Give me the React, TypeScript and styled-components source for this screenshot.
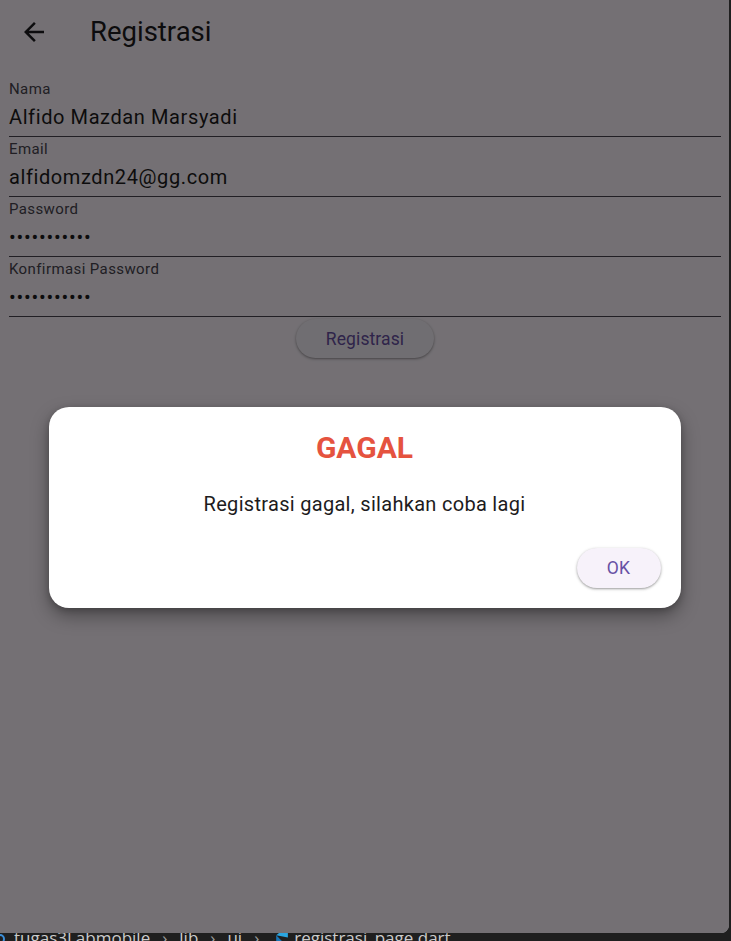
import React from "react";
import styled, { createGlobalStyle } from "styled-components";

const Global = createGlobalStyle`
  html, body {
    margin: 0;
    padding: 0;
    background: #1f1f1f;
    font-family: Roboto, "Liberation Sans", sans-serif;
  }
  #root {
    width: 731px;
    height: 941px;
    overflow: hidden;
  }
`;

const Screen = styled.div`
  display: flex;
  flex-direction: column;
  width: 731px;
  height: 941px;
`;

const AppWindow = styled.div`
  position: relative;
  z-index: 1;
  width: 729px;
  height: 933px;
  flex: none;
  background: #fef7ff;
  border-bottom-right-radius: 8px;
  overflow: hidden;
`;

const AppBar = styled.header`
  display: flex;
  align-items: center;
  height: 64px;
  padding-left: 19px;
`;

const IconButton = styled.button`
  display: flex;
  align-items: center;
  justify-content: center;
  width: 30px;
  height: 30px;
  padding: 0;
  border: none;
  background: transparent;
  color: #1d1b20;
`;

const Title = styled.h1`
  margin: 0 0 0 41px;
  font-size: 27.5px;
  font-weight: 400;
  color: #1d1b20;
  line-height: 34px;
`;

const Form = styled.form`
  display: flex;
  flex-direction: column;
  gap: 3px;
  padding: 16px 8px 0 9px;
`;

const Field = styled.div`
  display: flex;
  flex-direction: column;
  gap: 7px;
  padding-bottom: 6px;
  border-bottom: 1px solid #49454f;
`;

const Label = styled.label`
  font-size: 15px;
  line-height: 18px;
  letter-spacing: 0.4px;
  color: #49454f;
`;

const Value = styled.div<{ $secret?: boolean }>`
  font-size: 20px;
  line-height: 25px;
  letter-spacing: ${(p) => (p.$secret ? "0.75px" : "0.6px")};
  color: #1d1b20;
  white-space: nowrap;
`;

const ButtonRow = styled.div`
  display: flex;
  justify-content: center;
  margin-top: -1px;
`;

const PillButton = styled.button<{ $w: number; $h: number }>`
  width: ${(p) => p.$w}px;
  height: ${(p) => p.$h}px;
  border: none;
  border-radius: 999px;
  background: #f7f2fa;
  color: #6750a4;
  font-family: Roboto, "Liberation Sans", sans-serif;
  font-size: 17.5px;
  font-weight: 400;
  letter-spacing: 0.12px;
  box-shadow: 0 1px 2px rgba(0, 0, 0, 0.28), 0 1px 3px 1px rgba(0, 0, 0, 0.1);
  padding: 0;
`;

const Scrim = styled.div`
  position: absolute;
  inset: 0;
  background: rgba(0, 0, 0, 0.545);
  display: flex;
  justify-content: center;
  align-items: flex-start;
  padding-top: 407px;
  box-sizing: border-box;
`;

const Dialog = styled.div`
  width: 632px;
  height: 201px;
  box-sizing: border-box;
  background: #ffffff;
  border-radius: 20px;
  box-shadow: 0 8px 18px rgba(0, 0, 0, 0.35), 0 2px 6px rgba(0, 0, 0, 0.2);
  display: flex;
  flex-direction: column;
  padding: 23px 20px 20px;
`;

const DialogTitle = styled.h2`
  margin: 0;
  text-align: center;
  font-size: 30px;
  line-height: 36px;
  font-weight: 700;
  color: #e5533f;
`;

const DialogText = styled.p`
  margin: 26px 0 0;
  text-align: center;
  font-size: 20px;
  line-height: 24px;
  letter-spacing: 0.3px;
  color: #1d1b20;
`;

const Actions = styled.div`
  display: flex;
  justify-content: flex-end;
  margin-top: 32px;
`;

const Breadcrumb = styled.div`
  display: flex;
  align-items: flex-start;
  height: 8px;
  font-family: "Open Sans", "Noto Sans", sans-serif;
  font-size: 17px;
  line-height: 20px;
  color: #cccccc;
  white-space: nowrap;
`;

const Crumb = styled.span<{ $x: number }>`
  margin-left: ${(p) => p.$x}px;
  display: inline-flex;
  align-items: center;
  gap: 4px;
  margin-top: -5px;
`;

const Sep = styled.span<{ $x: number }>`
  color: #a0a0a0;
  margin-left: ${(p) => p.$x}px;
  margin-top: -5px;
`;

const FolderDot = styled.span`
  width: 10px;
  height: 10px;
  margin-left: -5px;
  margin-top: 1px;
  border-radius: 50%;
  border: 2px solid #3b8ed8;
  box-sizing: border-box;
  flex: none;
`;

const BackArrow = () => (
  <svg width="30" height="30" viewBox="0 0 24 24" fill="currentColor">
    <path d="M20 11H7.83l5.59-5.59L12 4l-8 8 8 8 1.41-1.41L7.83 13H20v-2z" />
  </svg>
);

const DartIcon = () => (
  <svg width="17" height="17" viewBox="0 0 16 16">
    <path d="M3 5 L8 1 L14 1 L14 7 Z" fill="#2aa5e0" />
    <path d="M3 5 L11 13 L3 13 Z" fill="#1a76b8" />
  </svg>
);

const fields = [
  { label: "Nama", value: "Alfido Mazdan Marsyadi" },
  { label: "Email", value: "alfidomzdn24@gg.com" },
  { label: "Password", value: "•••••••••••", secret: true },
  { label: "Konfirmasi Password", value: "•••••••••••", secret: true },
];

export default function App() {
  return (
    <>
      <Global />
      <Screen>
        <AppWindow>
          <AppBar>
            <IconButton aria-label="back">
              <BackArrow />
            </IconButton>
            <Title>Registrasi</Title>
          </AppBar>
          <Form>
            {fields.map((f) => (
              <Field key={f.label}>
                <Label>{f.label}</Label>
                <Value $secret={f.secret}>{f.value}</Value>
              </Field>
            ))}
            <ButtonRow>
              <PillButton type="button" $w={138} $h={39}>
                Registrasi
              </PillButton>
            </ButtonRow>
          </Form>
          <Scrim>
            <Dialog>
              <DialogTitle>GAGAL</DialogTitle>
              <DialogText>Registrasi gagal, silahkan coba lagi</DialogText>
              <Actions>
                <PillButton type="button" $w={84} $h={40}>
                  OK
                </PillButton>
              </Actions>
            </Dialog>
          </Scrim>
        </AppWindow>
        <Breadcrumb>
          <FolderDot />
          <Crumb $x={9}>tugas3Labmobile</Crumb>
          <Sep $x={12}>›</Sep>
          <Crumb $x={12}>lib</Crumb>
          <Sep $x={12}>›</Sep>
          <Crumb $x={12}>ui</Crumb>
          <Sep $x={12}>›</Sep>
          <Crumb $x={14}>
            <DartIcon />
            registrasi_page.dart
          </Crumb>
        </Breadcrumb>
      </Screen>
    </>
  );
}
